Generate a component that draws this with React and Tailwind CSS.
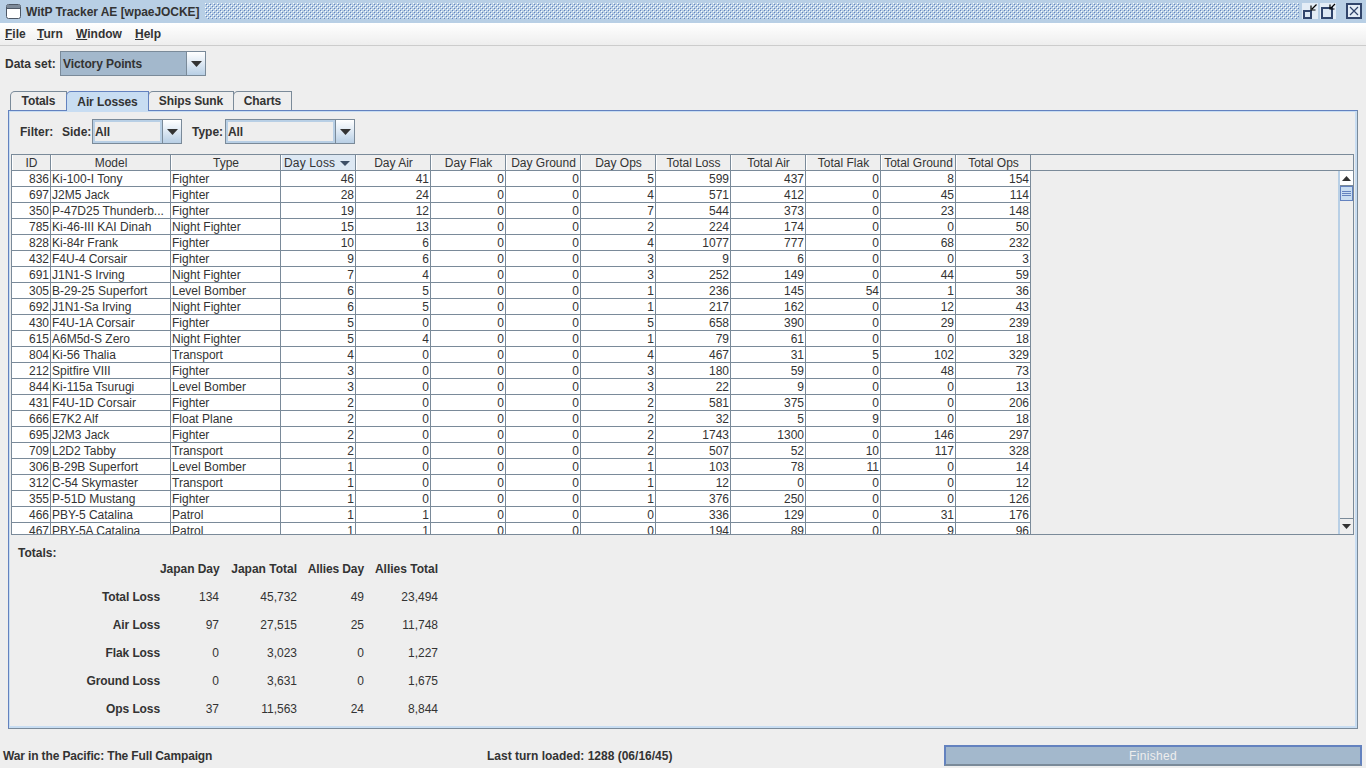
import React from 'react';

const columns = [
  { name: 'ID', w: 'w-[39px]' },
  { name: 'Model', w: 'w-[120px]' },
  { name: 'Type', w: 'w-[110px]' },
  { name: 'Day Loss', w: 'w-[75px]' },
  { name: 'Day Air', w: 'w-[75px]' },
  { name: 'Day Flak', w: 'w-[75px]' },
  { name: 'Day Ground', w: 'w-[75px]' },
  { name: 'Day Ops', w: 'w-[75px]' },
  { name: 'Total Loss', w: 'w-[75px]' },
  { name: 'Total Air', w: 'w-[75px]' },
  { name: 'Total Flak', w: 'w-[75px]' },
  { name: 'Total Ground', w: 'w-[75px]' },
  { name: 'Total Ops', w: 'w-[75px]' },
];

const rows = [
  [836, 'Ki-100-I Tony', 'Fighter', 46, 41, 0, 0, 5, 599, 437, 0, 8, 154],
  [697, 'J2M5 Jack', 'Fighter', 28, 24, 0, 0, 4, 571, 412, 0, 45, 114],
  [350, 'P-47D25 Thunderb...', 'Fighter', 19, 12, 0, 0, 7, 544, 373, 0, 23, 148],
  [785, 'Ki-46-III KAI Dinah', 'Night Fighter', 15, 13, 0, 0, 2, 224, 174, 0, 0, 50],
  [828, 'Ki-84r Frank', 'Fighter', 10, 6, 0, 0, 4, 1077, 777, 0, 68, 232],
  [432, 'F4U-4 Corsair', 'Fighter', 9, 6, 0, 0, 3, 9, 6, 0, 0, 3],
  [691, 'J1N1-S Irving', 'Night Fighter', 7, 4, 0, 0, 3, 252, 149, 0, 44, 59],
  [305, 'B-29-25 Superfort', 'Level Bomber', 6, 5, 0, 0, 1, 236, 145, 54, 1, 36],
  [692, 'J1N1-Sa Irving', 'Night Fighter', 6, 5, 0, 0, 1, 217, 162, 0, 12, 43],
  [430, 'F4U-1A Corsair', 'Fighter', 5, 0, 0, 0, 5, 658, 390, 0, 29, 239],
  [615, 'A6M5d-S Zero', 'Night Fighter', 5, 4, 0, 0, 1, 79, 61, 0, 0, 18],
  [804, 'Ki-56 Thalia', 'Transport', 4, 0, 0, 0, 4, 467, 31, 5, 102, 329],
  [212, 'Spitfire VIII', 'Fighter', 3, 0, 0, 0, 3, 180, 59, 0, 48, 73],
  [844, 'Ki-115a Tsurugi', 'Level Bomber', 3, 0, 0, 0, 3, 22, 9, 0, 0, 13],
  [431, 'F4U-1D Corsair', 'Fighter', 2, 0, 0, 0, 2, 581, 375, 0, 0, 206],
  [666, 'E7K2 Alf', 'Float Plane', 2, 0, 0, 0, 2, 32, 5, 9, 0, 18],
  [695, 'J2M3 Jack', 'Fighter', 2, 0, 0, 0, 2, 1743, 1300, 0, 146, 297],
  [709, 'L2D2 Tabby', 'Transport', 2, 0, 0, 0, 2, 507, 52, 10, 117, 328],
  [306, 'B-29B Superfort', 'Level Bomber', 1, 0, 0, 0, 1, 103, 78, 11, 0, 14],
  [312, 'C-54 Skymaster', 'Transport', 1, 0, 0, 0, 1, 12, 0, 0, 0, 12],
  [355, 'P-51D Mustang', 'Fighter', 1, 0, 0, 0, 1, 376, 250, 0, 0, 126],
  [466, 'PBY-5 Catalina', 'Patrol', 1, 1, 0, 0, 0, 336, 129, 0, 31, 176],
  [467, 'PBY-5A Catalina', 'Patrol', 1, 1, 0, 0, 0, 194, 89, 0, 9, 96],
];

const totals = [
  ['Total Loss', '134', '45,732', '49', '23,494'],
  ['Air Loss', '97', '27,515', '25', '11,748'],
  ['Flak Loss', '0', '3,023', '0', '1,227'],
  ['Ground Loss', '0', '3,631', '0', '1,675'],
  ['Ops Loss', '37', '11,563', '24', '8,844'],
];

const Arrow = ({ up, small }) => (
  <svg width={small ? 9 : 11} height={small ? 5 : 6} viewBox="0 0 11 6" fill="#333333">
    <path d={up ? 'M5.5 0 L11 6 L0 6 Z' : 'M0 0 L11 0 L5.5 6 Z'} />
  </svg>
);

const Combo = ({ width, value, selected }) => (
  <div className={`flex h-[25px] ${width} border border-[#7a8a99] bg-[#eeeeee]`}>
    <div className={`flex-1 border-2 flex items-center ${selected ? 'bg-[#a3b8cc] border-[#a3b8cc]' : 'border-[#b8cfe5]'}`}>
      <span className="font-bold tracking-[-0.1px]">{value}</span>
    </div>
    <div className="w-[19px] border-l border-[#7a8a99] bg-gradient-to-b from-white via-[#dde8f3] to-[#b8cfe5] flex items-center justify-center">
      <Arrow />
    </div>
  </div>
);

const Menu = ({ letter, rest, className }) => (
  <span className={className}>
    <span className="underline">{letter}</span>{rest}
  </span>
);

const Tab = ({ label, w, active }) => (
  <div
    className={`${w} border border-b-0 rounded-tl-[5px] -mr-[1px] flex items-center justify-center font-bold tracking-[-0.1px] ${active ? 'h-[20px] bg-[#c8ddf2] border-[#6382bf] relative z-10' : 'h-[19px] bg-[#eeeeee] border-[#7a8a99]'}`}
  >
    {label}
  </div>
);

export default function App() {
  return (
    <div className="w-[1366px] h-[768px] overflow-hidden flex flex-col bg-[#eeeeee] text-[12px] leading-[14px] text-[#333333] font-['Liberation_Sans',Arial,sans-serif]">
      {/* window title */}
      <div className="h-[23px] bg-[#b8cfe5] flex items-center pl-[6px] pr-[4px]">
        <svg width="15" height="15" viewBox="0 0 15 15" className="shrink-0">
          <rect x="0.5" y="0.5" width="14" height="14" rx="2" fill="#ffffff" stroke="#4d5866" />
          <rect x="1" y="1" width="13" height="3" fill="#7d8a99" />
          <rect x="1" y="4" width="13" height="1" fill="#4d5866" />
        </svg>
        <span className="ml-[5px] font-bold w-[179px] whitespace-nowrap tracking-[-0.04px]">WitP Tracker AE [wpaeJOCKE]</span>
        <svg className="flex-1 h-[16px] mb-[1px] min-w-0" shapeRendering="crispEdges">
          <defs>
            <pattern id="bumps" width="4" height="4" patternUnits="userSpaceOnUse">
              <rect x="0" y="0" width="1" height="1" fill="#ffffff" />
              <rect x="2" y="2" width="1" height="1" fill="#ffffff" />
              <rect x="1" y="1" width="1" height="1" fill="#6382bf" />
              <rect x="3" y="3" width="1" height="1" fill="#6382bf" />
            </pattern>
          </defs>
          <rect width="100%" height="100%" fill="url(#bumps)" />
        </svg>
        <div className="flex items-center pl-[3px] mb-[1px]">
          <svg width="16" height="16" viewBox="0 0 16 16" className="mr-[2px]">
            <rect width="16" height="16" fill="#e4edf6" />
            <rect x="2" y="8" width="7" height="7" fill="#dde8f3" stroke="#31456b" strokeWidth="2" />
            <path d="M14.5 1.5 L10 6 M9 2.5 V7 H13.5" stroke="#000000" fill="none" strokeWidth="1.2" />
          </svg>
          <svg width="16" height="16" viewBox="0 0 16 16" className="mr-[10px]">
            <rect width="16" height="16" fill="#e4edf6" />
            <rect x="2" y="5" width="10" height="10" fill="#dde8f3" stroke="#31456b" strokeWidth="2" />
            <path d="M15 1 L11 5 M10 1.5 V6 H14.5" stroke="#000000" fill="none" strokeWidth="1.2" />
          </svg>
          <svg width="16" height="16" viewBox="0 0 16 16">
            <rect x="1" y="1" width="14" height="14" fill="#e4edf6" stroke="#31456b" strokeWidth="2" />
            <path d="M4 4 L12 12 M12 4 L4 12" stroke="#31456b" strokeWidth="1.2" />
          </svg>
        </div>
      </div>

      {/* menu bar */}
      <div className="h-[23px] bg-gradient-to-b from-white to-[#eeeeee] border-b border-[#cccccc] flex items-center pl-[5px] font-bold">
        <Menu letter="F" rest="ile" className="w-[32px]" />
        <Menu letter="T" rest="urn" className="w-[39px]" />
        <Menu letter="W" rest="indow" className="w-[59px]" />
        <Menu letter="H" rest="elp" />
      </div>

      {/* data set */}
      <div className="flex items-center h-[25px] mt-[5px] pl-[5px]">
        <span className="font-bold w-[55px]">Data set:</span>
        <Combo width="w-[146px]" value="Victory Points" selected />
      </div>

      {/* tabs */}
      <div className="flex h-[19px] mt-[15px] pl-[10px] items-start">
        <Tab label="Totals" w="w-[57px]" />
        <Tab label="Air Losses" w="w-[83px]" active />
        <Tab label="Ships Sunk" w="w-[86px]" />
        <Tab label="Charts" w="w-[59px]" />
      </div>

      {/* tab panel */}
      <div className="ml-[8px] w-[1350px] h-[619px] border border-[#6382bf] border-b-[#7a8a99] border-r-[#7a8a99] flex flex-col">
        <div className="flex-1 border border-[#c8ddf2] border-b-2 border-r-2 flex flex-col min-h-0">
          <div className="flex items-center h-[25px] mt-[7px] ml-[10px] font-bold shrink-0">
            <span className="w-[42px]">Filter:</span>
            <span className="w-[30px]">Side:</span>
            <Combo width="w-[90px]" value="All" />
            <span className="w-[33px] ml-[10px]">Type:</span>
            <Combo width="w-[130px]" value="All" />
          </div>

          {/* table */}
          <div className="mt-[10px] mx-[1px] h-[381px] shrink-0 border border-[#7a8a99] flex flex-col overflow-hidden">
            <div className="flex h-[16px] border-b border-[#7a8a99] shrink-0">
              {columns.map(c => (
                <div
                  key={c.name}
                  className={`${c.w} shrink-0 pt-[1px] border-r border-[#7a8a99] border-l border-l-white flex items-center justify-center ${c.name === 'Day Loss' ? 'bg-[#dde8f3]' : ''}`}
                >
                  {c.name === 'Day Loss' ? (
                    <div className="w-full flex items-center pl-[2px]">
                      <span className="tracking-[0.15px]">Day Loss</span>
                      <svg width="10" height="5" viewBox="0 0 10 5" fill="#3d4f66" className="ml-[5px]">
                        <path d="M0 0 L10 0 L5 5 Z" />
                      </svg>
                    </div>
                  ) : (
                    <span>{c.name}</span>
                  )}
                </div>
              ))}
            </div>
            <div className="flex flex-1 min-h-0">
              <div className="w-[1019px] shrink-0 overflow-hidden bg-white">
                {rows.map(r => (
                  <div key={r[0]} className="flex h-[16px] leading-[16px] border-b border-[#7a8a99]">
                    {r.map((v, i) => (
                      <div
                        key={i}
                        className={`${columns[i].w} shrink-0 border-r border-[#7a8a99] whitespace-nowrap overflow-hidden ${i === 1 || i === 2 ? 'pl-[1px]' : 'text-right pr-[1px]'}`}
                      >
                        {v}
                      </div>
                    ))}
                  </div>
                ))}
              </div>
              <div className="flex-1" />
              {/* scrollbar */}
              <div className="w-[15px] border-l-2 border-l-[#b8cfe5] flex flex-col">
                <div className="h-[15px] border-b border-[#7a8a99] bg-white flex items-center justify-center shrink-0">
                  <Arrow up small />
                </div>
                <div className="h-[15px] bg-[#c8ddf2] border border-[#6382bf] flex flex-col items-center justify-center gap-[1px] shrink-0">
                  <div className="w-[9px] h-[1px] bg-[#6382bf]" />
                  <div className="w-[9px] h-[1px] bg-[#6382bf]" />
                  <div className="w-[9px] h-[1px] bg-[#6382bf]" />
                </div>
                <div className="flex-1" />
                <div className="h-[16px] border-t border-[#7a8a99] bg-[#eeeeee] flex items-center justify-center shrink-0">
                  <Arrow small />
                </div>
              </div>
            </div>
          </div>

          {/* totals */}
          <div className="font-bold ml-[8px] mt-[11px] shrink-0">Totals:</div>
          <div className="grid grid-cols-[150px_59px_78px_67px_74px] auto-rows-[28px] -mt-[5px] items-center text-right whitespace-nowrap">
            <div />
            <div className="font-bold tracking-[-0.05px]">Japan Day</div>
            <div className="font-bold">Japan Total</div>
            <div className="font-bold tracking-[-0.1px]">Allies Day</div>
            <div className="font-bold">Allies Total</div>
            {totals.map(t => (
              <React.Fragment key={t[0]}>
                <div className="font-bold tracking-[-0.1px]">{t[0]}</div>
                <div>{t[1]}</div>
                <div>{t[2]}</div>
                <div>{t[3]}</div>
                <div>{t[4]}</div>
              </React.Fragment>
            ))}
          </div>
        </div>
      </div>

      {/* status bar */}
      <div className="flex items-center h-[21px] mt-[16px] font-bold">
        <span className="w-[487px] pl-[3px] tracking-[-0.135px]">War in the Pacific: The Full Campaign</span>
        <span className="w-[457px]">Last turn loaded: 1288 (06/16/45)</span>
        <div className="w-[418px] h-[21px] border-2 border-[#6382bf] border-b-[#7a8a99] bg-[#a3b8cc] flex items-center justify-center font-normal tracking-[0.3px] text-[#eeeeee]">
          Finished
        </div>
      </div>
    </div>
  );
}
